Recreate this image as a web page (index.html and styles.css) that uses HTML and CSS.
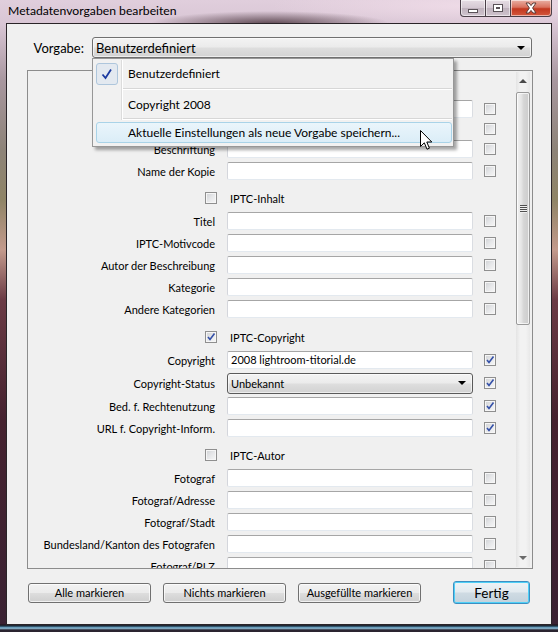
FILE: index.html
```html
<!DOCTYPE html>
<html lang="de">
<head>
<meta charset="utf-8">
<title>Metadatenvorgaben bearbeiten</title>
<link rel="stylesheet" href="styles.css">
</head>
<body>
<div class="window">
  <div class="titlebar">
    <span class="title">Metadatenvorgaben bearbeiten</span>
    <div class="caption">
      <div class="cbtn cmin"><span class="g-min"></span></div>
      <div class="cbtn cmax"><span class="g-max"></span></div>
      <div class="cbtn cclose">
        <svg width="14" height="12" viewBox="0 0 14 12"><path d="M2 1 L5 1 L7 3.6 L9 1 L12 1 L8.6 6 L12 11 L9 11 L7 8.4 L5 11 L2 11 L5.4 6 Z" fill="#fff" stroke="#5a3a36" stroke-width="1"/></svg>
      </div>
    </div>
  </div>

  <div class="client">
    <div class="preset-row">
      <span class="preset-label">Vorgabe:</span>
      <div class="select big"><span class="sel-text">Benutzerdefiniert</span><span class="arrow"></span></div>
    </div>

    <div class="panel">
      <div class="rows">
        <div class="hdr first"><span class="cb"></span><span class="hdr-text">Basis-Info</span></div>
        <div class="row"><span class="lbl">Bezeichnung</span><span class="inp"></span><span class="cb"></span></div>
        <div class="row short"><span class="lbl">Bewertung</span><span class="rating"></span><span class="cb"></span></div>
        <div class="row"><span class="lbl">Beschriftung</span><span class="inp"></span><span class="cb"></span></div>
        <div class="row"><span class="lbl">Name der Kopie</span><span class="inp"></span><span class="cb"></span></div>

        <div class="hdr"><span class="cb"></span><span class="hdr-text">IPTC-Inhalt</span></div>
        <div class="row"><span class="lbl">Titel</span><span class="inp"></span><span class="cb"></span></div>
        <div class="row"><span class="lbl">IPTC-Motivcode</span><span class="inp"></span><span class="cb"></span></div>
        <div class="row"><span class="lbl">Autor der Beschreibung</span><span class="inp"></span><span class="cb"></span></div>
        <div class="row"><span class="lbl">Kategorie</span><span class="inp"></span><span class="cb"></span></div>
        <div class="row"><span class="lbl">Andere Kategorien</span><span class="inp"></span><span class="cb"></span></div>

        <div class="hdr tall"><span class="cb on"><svg viewBox="0 0 10 10"><path d="M2 5 L4 7.5 L8.5 1.5" fill="none" stroke="#3450a8" stroke-width="1.6"/></svg></span><span class="hdr-text">IPTC-Copyright</span></div>
        <div class="row"><span class="lbl">Copyright</span><span class="inp">2008 lightroom-titorial.de</span><span class="cb on"><svg viewBox="0 0 10 10"><path d="M2 5 L4 7.5 L8.5 1.5" fill="none" stroke="#3450a8" stroke-width="1.6"/></svg></span></div>
        <div class="row sel"><span class="lbl">Copyright-Status</span><span class="select small"><span class="sel-text">Unbekannt</span><span class="arrow"></span></span><span class="cb on"><svg viewBox="0 0 10 10"><path d="M2 5 L4 7.5 L8.5 1.5" fill="none" stroke="#3450a8" stroke-width="1.6"/></svg></span></div>
        <div class="row"><span class="lbl">Bed. f. Rechtenutzung</span><span class="inp"></span><span class="cb on"><svg viewBox="0 0 10 10"><path d="M2 5 L4 7.5 L8.5 1.5" fill="none" stroke="#3450a8" stroke-width="1.6"/></svg></span></div>
        <div class="row"><span class="lbl">URL f. Copyright-Inform.</span><span class="inp"></span><span class="cb on"><svg viewBox="0 0 10 10"><path d="M2 5 L4 7.5 L8.5 1.5" fill="none" stroke="#3450a8" stroke-width="1.6"/></svg></span></div>

        <div class="hdr"><span class="cb"></span><span class="hdr-text">IPTC-Autor</span></div>
        <div class="row"><span class="lbl">Fotograf</span><span class="inp"></span><span class="cb"></span></div>
        <div class="row"><span class="lbl">Fotograf/Adresse</span><span class="inp"></span><span class="cb"></span></div>
        <div class="row"><span class="lbl">Fotograf/Stadt</span><span class="inp"></span><span class="cb"></span></div>
        <div class="row"><span class="lbl">Bundesland/Kanton des Fotografen</span><span class="inp"></span><span class="cb"></span></div>
        <div class="row"><span class="lbl">Fotograf/PLZ</span><span class="inp"></span><span class="cb"></span></div>
      </div>
      <div class="scrollbar">
        <div class="sb-btn"><span class="tri-up"></span></div>
        <div class="sb-thumb"><span class="grip"></span></div>
        <div class="sb-track"></div>
        <div class="sb-btn"><span class="tri-down"></span></div>
      </div>
    </div>

    <div class="buttons">
      <div class="btn">Alle markieren</div>
      <div class="btn">Nichts markieren</div>
      <div class="btn">Ausgefüllte markieren</div>
      <div class="btn default">Fertig</div>
    </div>
  </div>

  <div class="menu">
    <span class="menu-vsep"></span>
    <div class="mi first"><span class="mi-check"><svg width="14" height="14" viewBox="0 0 14 14"><path d="M2.5 7.5 L5.5 11 L11 2.5" fill="none" stroke="#1b3aa0" stroke-width="1.8"/></svg></span><span class="mi-text">Benutzerdefiniert</span></div>
    <div class="msep"></div>
    <div class="mi"><span class="mi-space"></span><span class="mi-text">Copyright 2008</span></div>
    <div class="msep"></div>
    <div class="mi hot"><span class="mi-text">Aktuelle Einstellungen als neue Vorgabe speichern...</span></div>
  </div>

  <svg class="cursor" width="13" height="21" viewBox="0 0 13 21"><path d="M0.5 0.5 L0.5 16.5 L4.3 12.8 L7 19.2 L9.4 18.2 L6.8 12 L11.8 12 Z" fill="#fff" stroke="#000" stroke-width="1"/></svg>
</div>
</body>
</html>
```
FILE: styles.css
```css
* { box-sizing: border-box; }
html, body { margin: 0; padding: 0; }
body {
  width: 558px;
  height: 632px;
  overflow: hidden;
  font-family: Lato, "Open Sans", sans-serif;
  color: #000;
}
.window {
  position: relative;
  width: 558px;
  height: 632px;
  display: flex;
  flex-direction: column;
  background:
    linear-gradient(180deg, rgba(0,0,0,0) 624px, #161218 625px, #3a6a88 627px, #9ad0ec 628px, #2a2430 630px),
    linear-gradient(180deg, #e0cedc 0px, #d9c6d5 24px, #a8979f 80px, #8d8378 150px, #8f8466 200px, #c39a8c 250px, #6b3b45 300px, #45222f 420px, #3a2233 632px);
}
.titlebar {
  height: 23px;
  flex: none;
  display: flex;
  align-items: flex-start;
  background:
    radial-gradient(ellipse 120px 13px at 270px 24px, rgba(50,28,36,0.75), rgba(50,28,36,0) 100%),
    radial-gradient(ellipse 200px 20px at 470px 6px, rgba(245,225,236,0.7), rgba(245,225,236,0) 100%);
}
.title {
  font-size: 12.2px;
  margin: 3px 0 0 8px;
  color: #000;
}
.caption {
  margin-left: auto;
  margin-right: 6px;
  display: flex;
}
.cbtn {
  height: 17px;
  border: 1px solid #4a3f48;
  border-top: none;
  display: flex;
  align-items: center;
  justify-content: center;
  box-shadow: inset 0 0 0 1px rgba(255,255,255,0.55);
}
.cmin {
  width: 26px;
  border-bottom-left-radius: 4px;
  background: linear-gradient(180deg, #e6dde4 0%, #d4c8d2 50%, #bfb2bd 51%, #cfc3cd 100%);
}
.cmax {
  width: 25px;
  border-left: none;
  background: linear-gradient(180deg, #e6dde4 0%, #d4c8d2 50%, #bfb2bd 51%, #cfc3cd 100%);
}
.cclose {
  width: 41px;
  border-left: none;
  border-bottom-right-radius: 4px;
  background: linear-gradient(180deg, #e9b0a4 0%, #d9725f 45%, #c2381f 55%, #d4583e 100%);
}
.g-min {
  width: 10px;
  height: 4px;
  margin-top: 5px;
  background: #fff;
  border: 1px solid #5a5258;
}
.g-max {
  width: 10px;
  height: 8px;
  border: 1px solid #5a5258;
  background: #fff;
  box-shadow: inset 0 0 0 2px #fff, inset 0 0 0 3px #5a5258;
}

.client {
  flex: none;
  margin: 0 6px 0 6px;
  height: 602px;
  background: #f0f0f0;
  border: 1px solid #2a2428;
  padding: 13px 18px 0 20px;
  display: flex;
  flex-direction: column;
}
.preset-row {
  display: flex;
  align-items: center;
  height: 21px;
}
.preset-label {
  width: 65px;
  padding-right: 8px;
  text-align: right;
  font-size: 13px;
}
.select {
  display: flex;
  align-items: center;
  border: 1px solid #707070;
  border-radius: 3px;
  background: linear-gradient(180deg, #f3f3f3 0%, #ebebeb 48%, #dedede 52%, #d2d2d2 100%);
  box-shadow: inset 0 0 0 1px rgba(255,255,255,0.6);
}
.select.big {
  width: 440px;
  height: 21px;
  padding: 0 6px 0 3px;
  font-size: 13px;
}
.select.small {
  width: 246px;
  height: 21px;
  margin-left: 12px;
  padding: 0 6px 0 3px;
  font-size: 11px;
  border-color: #5a5a5a;
}
.sel-text { flex: 1; white-space: nowrap; }
.arrow {
  width: 0;
  height: 0;
  border-left: 4px solid transparent;
  border-right: 4px solid transparent;
  border-top: 4px solid #000;
}

.panel {
  margin-top: 12px;
  height: 499px;
  border: 1px solid #8c8c8c;
  background: #f0f0f0;
  display: flex;
}
.rows {
  flex: 1;
  overflow: hidden;
  display: flex;
  flex-direction: column;
}
.hdr {
  flex: none;
  height: 28px;
  padding: 4px 0 0 177px;
  display: flex;
  align-items: center;
  font-size: 11px;
}
.hdr.first { height: 27px; }
.hdr.tall { height: 29px; padding-top: 5px; }
.hdr-text { margin-left: 13px; }
.row {
  flex: none;
  height: 22px;
  display: flex;
  align-items: center;
  font-size: 11px;
}
.row.short { height: 18px; }
.row.sel { height: 24px; }
.lbl {
  width: 187px;
  flex: none;
  text-align: right;
  white-space: nowrap;
}
.inp {
  flex: none;
  width: 246px;
  height: 18px;
  margin-left: 12px;
  background: #fff;
  border: 1px solid;
  border-color: #a6a6a6 #dadde2 #e3e9ef #d4d6dc;
  border-radius: 2px;
  padding-left: 3px;
  line-height: 16px;
  font-size: 11px;
  white-space: nowrap;
}
.rating {
  flex: none;
  width: 246px;
  margin-left: 12px;
}
.cb {
  flex: none;
  width: 12px;
  height: 12px;
  margin-left: 11px;
  border: 1px solid #8f8f8f;
  background: linear-gradient(135deg, #cfd1d4 0%, #e6e7e9 50%, #f7f7f7 100%);
  box-shadow: inset 0 0 0 1px #f6f6f6;
  display: flex;
  align-items: center;
  justify-content: center;
}
.hdr .cb { margin-left: 0; }
.cb svg { width: 10px; height: 10px; }

.scrollbar {
  flex: none;
  width: 14px;
  margin: 1px 2px 1px 0;
  display: flex;
  flex-direction: column;
  background: linear-gradient(90deg, #e4e4e4 0%, #f2f2f2 30%, #f2f2f2 70%, #e8e8e8 100%);
}
.sb-btn {
  height: 18px;
  flex: none;
  display: flex;
  align-items: center;
  justify-content: center;
}
.tri-up {
  width: 0; height: 0;
  border-left: 4px solid transparent;
  border-right: 4px solid transparent;
  border-bottom: 4px solid #4a4a4a;
}
.tri-down {
  width: 0; height: 0;
  border-left: 4px solid transparent;
  border-right: 4px solid transparent;
  border-top: 4px solid #6a6a6a;
}
.sb-thumb {
  margin-top: 2px;
  height: 233px;
  flex: none;
  border: 1px solid #9a9a9a;
  border-radius: 2px;
  background: linear-gradient(90deg, #f2f2f2 0%, #e6e6e6 35%, #d6d6d6 55%, #cccccc 100%);
  box-shadow: inset 0 0 0 1px rgba(255,255,255,0.7);
  display: flex;
  align-items: center;
  justify-content: center;
}
.grip {
  width: 7px;
  height: 8px;
  background: repeating-linear-gradient(180deg, #4f4f4f 0 1px, #f0f0f0 1px 2px);
}
.sb-track { flex: 1; }

.buttons {
  margin-top: 12px;
  height: 23px;
  display: flex;
  align-items: center;
  padding-left: 1px;
}
.btn {
  width: 123px;
  height: 20px;
  margin-right: 12px;
  border: 1px solid #707070;
  border-radius: 3px;
  background: linear-gradient(180deg, #f2f2f2 0%, #ebebeb 48%, #dddddd 52%, #cfcfcf 100%);
  box-shadow: inset 0 0 0 1px rgba(255,255,255,0.7);
  display: flex;
  align-items: center;
  justify-content: center;
  font-size: 11px;
  white-space: nowrap;
}
.btn.default {
  width: 77px;
  height: 23px;
  margin-left: 20px;
  margin-right: 0;
  border-color: #3c8fc2;
  box-shadow: inset 0 0 0 1px #4fd0f7;
  background: linear-gradient(180deg, #eef3f6 0%, #e2eaef 48%, #cfdbe3 52%, #c3d2dc 100%);
  font-size: 13.5px;
}

.menu {
  position: absolute;
  left: 92px;
  top: 58px;
  width: 362px;
  height: 89px;
  background: #f1f1f1;
  border: 1px solid #979797;
  box-shadow: 3px 3px 3px rgba(0,0,0,0.35);
  display: flex;
  flex-direction: column;
  font-size: 12px;
}
.menu-vsep {
  position: absolute;
  left: 28px;
  top: 1px;
  width: 2px;
  height: 60px;
  background: linear-gradient(90deg, #dcdcdc 0 1px, #ffffff 1px 2px);
}
.mi {
  height: 28px;
  flex: none;
  display: flex;
  align-items: center;
  padding-left: 3px;
}
.mi.first { height: 29px; }
.mi-check {
  width: 22px;
  height: 22px;
  margin-right: 10px;
  border: 1px solid #aec6dc;
  border-radius: 3px;
  background: #e3e9f0;
  display: flex;
  align-items: center;
  justify-content: center;
}
.mi-space { width: 22px; margin-right: 10px; }
.msep {
  height: 2px;
  flex: none;
  margin: 0 1px 0 29px;
  background: linear-gradient(180deg, #d7d7d7 0 1px, #ffffff 1px 2px);
}
.mi.hot {
  position: relative;
  height: 21px;
  margin: 2px 1px 0 3px;
  padding-left: 31px;
  border: 1px solid #a9d3e8;
  border-radius: 3px;
  background: linear-gradient(180deg, #eaf5fb 0%, #dbedf7 100%);
}
.cursor {
  position: absolute;
  left: 420px;
  top: 130px;
}
```
